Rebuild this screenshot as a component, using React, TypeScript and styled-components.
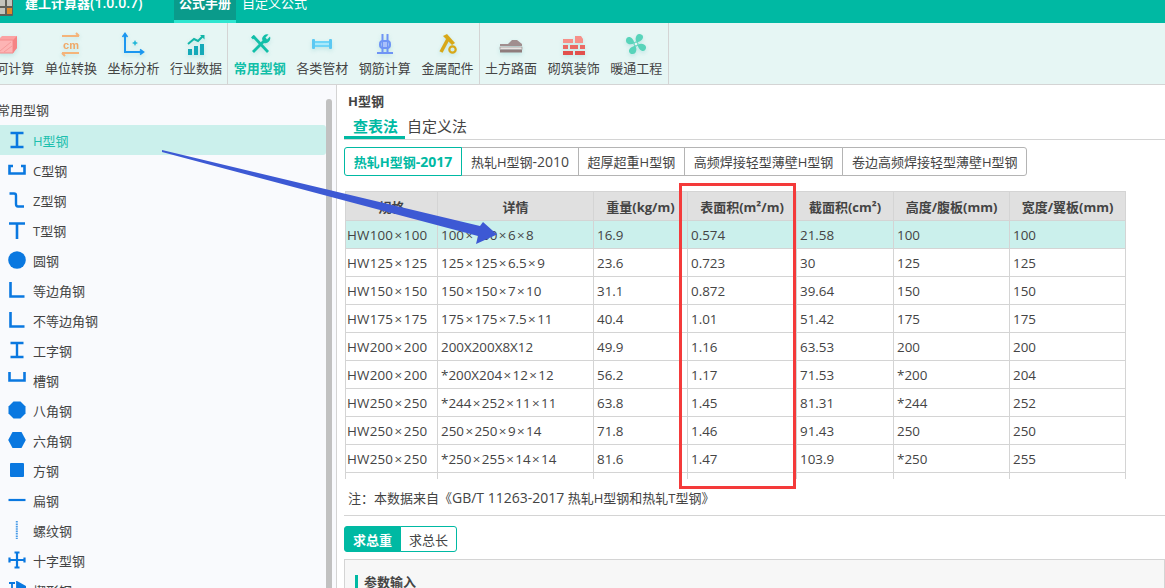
import React from 'react'
import styled, { createGlobalStyle } from 'styled-components'

const FONT = '"Open Sans", "Noto Sans CJK SC", "Noto Sans", sans-serif'
const TEAL = '#00b9a3'
const BORDER = '#d4d4d4'

const GlobalStyle = createGlobalStyle`
  html, body {
    margin: 0;
    height: 100%;
    overflow: hidden;
    background: #fff;
  }
  body {
    font-family: ${FONT};
    font-size: 13px;
    color: #444;
  }
`

// the screenshot is a crop of a bigger window, so the app hangs over the top and left edges
const Root = styled.div`
  position: relative;
  margin: -17px 0 0 -23px;
  width: 1188px;
  height: 605px;
  overflow: hidden;
  display: flex;
  flex-direction: column;
`

const Header = styled.div`
  height: 40px;
  flex: none;
  background: ${TEAL};
  display: flex;
  align-items: stretch;
  color: #fff;
`

const Logo = styled.svg`
  width: 32px;
  height: 32px;
  margin: 0 0 0 4px;
  align-self: center;
  position: relative;
  top: -1px;
`

const AppTitle = styled.div`
  font-size: 13px;
  font-weight: 600;
  line-height: 40px;
  margin-left: 12px;
  width: 149px;
  white-space: nowrap;
`

const Latin = styled.span`
  font-size: 14px;
`

const HeaderTab = styled.div<{ $active?: boolean }>`
  width: ${(p) => (p.$active ? '62px' : 'auto')};
  padding: ${(p) => (p.$active ? '0' : '0 0 0 6px')};
  box-sizing: border-box;
  text-align: center;
  line-height: 40px;
  font-size: 13px;
  font-weight: ${(p) => (p.$active ? 700 : 400)};
  background: ${(p) => (p.$active ? '#0a9b8b' : 'transparent')};
  border-bottom: 3px solid ${(p) => (p.$active ? '#2ee6d0' : 'transparent')};
  white-space: nowrap;
`

const Toolbar = styled.div`
  height: 61px;
  flex: none;
  display: flex;
  background: #e6f6f4;
  border-bottom: 1px solid ${BORDER};
`

const ToolGroup = styled.div`
  display: flex;
  border-right: 1px solid ${BORDER};
`

const ToolItem = styled.div<{ $active?: boolean }>`
  width: 62.6px;
  display: flex;
  flex-direction: column;
  align-items: center;
  padding-top: 8px;
  box-sizing: border-box;
  color: ${(p) => (p.$active ? '#12bfa8' : '#444')};
  font-weight: ${(p) => (p.$active ? 700 : 400)};
`

const ToolIcon = styled.svg`
  width: 26px;
  height: 26px;
  flex: none;
  filter: drop-shadow(0 2px 2px rgba(120, 200, 200, 0.35));
`

const ToolLabel = styled.div`
  margin-top: 2px;
  line-height: 18px;
  white-space: nowrap;
`

const Body = styled.div`
  flex: 1;
  display: flex;
  min-height: 0;
`

const Sidebar = styled.div`
  width: 360px;
  flex: none;
  display: flex;
  background: #f9fafd;
  border-right: 1px solid ${BORDER};
  box-sizing: border-box;
  overflow: hidden;
`

const SideList = styled.div`
  width: 349px;
  flex: none;
`

const SideHead = styled.div`
  height: 40px;
  box-sizing: border-box;
  padding: 11px 0 0 20px;
  line-height: 28px;
`

const SideItem = styled.div<{ $active?: boolean }>`
  height: 30px;
  display: flex;
  align-items: center;
  gap: 7px;
  padding-left: 31px;
  border-radius: 0 3px 3px 0;
  background: ${(p) => (p.$active ? '#cbf0ec' : 'transparent')};
  color: ${(p) => (p.$active ? '#1dbfae' : '#444')};
`

const SideIcon = styled.svg`
  width: 18px;
  height: 18px;
  flex: none;
`

const ScrollThumb = styled.div`
  width: 6px;
  height: 600px;
  margin-top: 14px;
  background: #c1c1c1;
  border-radius: 3px 3px 0 0;
`

const Content = styled.div`
  flex: 1;
  min-width: 0;
  padding-left: 7px;
  background: #fff;
`

const PageTitle = styled.div`
  padding: 7px 0 0 4px;
  font-weight: 700;
  line-height: 18px;
  height: 31px;
  box-sizing: border-box;
  color: #444;
`

const MethodTabs = styled.div`
  display: flex;
  height: 24px;
  box-sizing: border-box;
  border-bottom: 1px solid ${BORDER};
`

const MethodTab = styled.div<{ $active?: boolean }>`
  height: 23px;
  box-sizing: border-box;
  padding: ${(p) => (p.$active ? '0 7px 0 9px' : '0 0 0 2px')};
  font-size: 15px;
  line-height: 21px;
  font-weight: ${(p) => (p.$active ? 700 : 400)};
  color: ${(p) => (p.$active ? TEAL : '#444')};
  border-bottom: ${(p) => (p.$active ? `3px solid ${TEAL}` : 'none')};
`

const SegmentRow = styled.div<{ $top: number; $height: number }>`
  display: inline-flex;
  margin-top: ${(p) => p.$top}px;
  height: ${(p) => p.$height}px;
  vertical-align: top;
`

const SegmentWrap = styled.div`
  display: block;
  height: 36px;
`

const Segment = styled.div<{ $active?: boolean; $solid?: boolean; $teal?: boolean }>`
  padding: 0 ${(p) => (p.$solid || p.$teal ? '8px' : '8.8px')};
  display: flex;
  align-items: center;
  box-sizing: border-box;
  white-space: nowrap;
  background: ${(p) => (p.$solid ? TEAL : '#fff')};
  color: ${(p) => (p.$solid ? '#fff' : p.$active ? TEAL : '#444')};
  font-weight: ${(p) => (p.$active || p.$solid ? 700 : 400)};
  border: 1px solid ${(p) => (p.$active || p.$teal || p.$solid ? TEAL : '#b4b4b4')};
  margin-left: -1px;
  position: ${(p) => (p.$active ? 'relative' : 'static')};
  &:first-child {
    margin-left: 0;
    border-radius: 3px 0 0 3px;
  }
  &:last-child {
    border-radius: 0 3px 3px 0;
  }
`

const TableWrap = styled.div`
  margin: 15px 0 0 1px;
  width: 781px;
  height: 288px;
  overflow: hidden;
`

const Table = styled.table`
  width: 780px;
  table-layout: fixed;
  border-collapse: collapse;
`

const HeadCell = styled.th`
  height: 28px;
  padding: 0;
  background: #e0e0e0;
  border: 1px solid ${BORDER};
  font-size: 13px;
  font-weight: 700;
  text-align: center;
  color: #444;
`

const Row = styled.tr<{ $active?: boolean }>`
  background: ${(p) => (p.$active ? '#cbf0ec' : '#fff')};
`

const Cell = styled.td`
  height: 27px;
  padding: 0 3px;
  border: 1px solid ${BORDER};
  font-size: 13.4px;
  color: #444;
  white-space: nowrap;
  overflow: hidden;
  &:first-child {
    padding-left: 1px;
    letter-spacing: 0.2px;
  }
`

const Times = styled.span`
  margin: 0 1.4px;
`

const Note = styled.div`
  height: 37px;
  box-sizing: border-box;
  padding: 10px 0 0 4px;
  line-height: 18px;
  border-bottom: 1px solid ${BORDER};
`

const Panel = styled.div`
  margin-top: 7px;
  height: 80px;
  background: #f7f7f7;
  border: 1px solid ${BORDER};
  padding: 12px 0 0 10px;
  box-sizing: border-box;
`

const PanelTitle = styled.div`
  font-weight: 700;
  line-height: 18px;
  border-left: 3px solid ${TEAL};
  padding-left: 6px;
  height: 14px;
  display: flex;
  align-items: center;
  margin-top: 3px;
`

const Overlay = styled.svg`
  position: absolute;
  left: 23px;
  top: 17px;
  width: 1165px;
  height: 588px;
  pointer-events: none;
`

const RedBox = styled.div`
  position: absolute;
  left: 702px;
  top: 200px;
  width: 117px;
  height: 306px;
  box-sizing: border-box;
  border: 3px solid #f43a3a;
`

const blade = 'M13 11 C10 9 9.5 4 12.5 2.5 C16 1 19 4 16.5 8 C15.5 9.5 14.5 10.5 13 11 Z'

const tools = [
  [
    {
      label: '几何计算',
      icon: (
        <>
          <path d="M3 9 L7 5 H22 V17 L18 22 H3 Z" fill="#fba3a3" />
          <path d="M3 9 H18 V22 H3 Z" fill="#fdb4b4" stroke="#f58a8a" />
          <path d="M18 9 L22 5 V17 L18 22 Z" fill="#f58484" />
          <path d="M5 20 L16 11 M9 21 L17 15" stroke="#f69a9a" />
        </>
      ),
    },
    {
      label: '单位转换',
      icon: (
        <>
          <path d="M4 5 H21 M18 2 L21 5" stroke="#f4b47a" strokeWidth="2" fill="none" />
          <path d="M21 22 H4 M7 25 L4 22" stroke="#f4b47a" strokeWidth="2" fill="none" />
          <text x="13" y="17.5" fontSize="11" fontWeight="700" textAnchor="middle" fill="#f0a968" fontFamily="Liberation Sans">cm</text>
        </>
      ),
    },
    {
      label: '坐标分析',
      icon: (
        <>
          <path d="M5 3 V21 H23" stroke="#1b97f0" strokeWidth="2" fill="none" />
          <path d="M2.5 6 L5 2.5 L7.5 6 M20 18.5 L23.5 21 L20 23.5" stroke="#1b97f0" strokeWidth="1.6" fill="none" />
          <path d="M15 9 L16 11 L18 12 L16 13 L15 15 L14 13 L12 12 L14 11 Z" fill="#25b8d8" />
        </>
      ),
    },
    {
      label: '行业数据',
      icon: (
        <>
          <rect x="5" y="18" width="4" height="6" fill="#15a9b8" />
          <rect x="11" y="15" width="4" height="9" fill="#15a9b8" />
          <rect x="17" y="13" width="4" height="11" fill="#15a9b8" />
          <path d="M5 13 L11 8 L15 10 L20 5" stroke="#12b5a8" strokeWidth="2" fill="none" />
          <path d="M17 4 H21.5 V8.5 Z" fill="#12b5a8" />
        </>
      ),
    },
  ],
  [
    {
      label: '常用型钢',
      active: true,
      icon: (
        <>
          <path d="M6 5 L21 21" stroke="#12bfa8" strokeWidth="2.8" />
          <path d="M6 21 L17 10" stroke="#12bfa8" strokeWidth="2.8" />
          <path d="M15 8 A5 5 0 0 1 21.5 3.5 L18.5 6.5 L20 8.5 L23 5.5 A5 5 0 0 1 17 12 Z" fill="#12bfa8" />
          <path d="M4 6.5 L6.5 4 L8.5 6 L6 8.5 Z" fill="#12bfa8" />
        </>
      ),
    },
    {
      label: '各类管材',
      icon: (
        <>
          <rect x="3" y="10" width="20" height="6" fill="#6ed5f7" />
          <rect x="3" y="8" width="3" height="10" rx="1" fill="#5cc8f2" />
          <rect x="20" y="8" width="3" height="10" rx="1" fill="#5cc8f2" />
          <rect x="6" y="12" width="14" height="2" fill="#a8e9fb" />
        </>
      ),
    },
    {
      label: '钢筋计算',
      icon: (
        <>
          <path d="M10.5 3 V22 M15.5 3 V22" stroke="#6f94f5" strokeWidth="2" />
          <rect x="8" y="10" width="10" height="7" rx="3" fill="none" stroke="#6f94f5" strokeWidth="2" />
          <path d="M5 22 H21" stroke="#6f94f5" strokeWidth="2" />
          <rect x="11" y="11" width="4" height="5" fill="#a9c0fb" />
        </>
      ),
    },
    {
      label: '金属配件',
      icon: (
        <>
          <path d="M9 5 L13 3 L21 12 L18 14 Z" fill="#d8a818" />
          <path d="M14 8 L7 21" stroke="#d8a818" strokeWidth="3.5" />
          <circle cx="18.5" cy="18.5" r="3.2" fill="none" stroke="#d8a818" strokeWidth="2.2" />
        </>
      ),
    },
  ],
  [
    {
      label: '土方路面',
      icon: (
        <>
          <path d="M2 13 H10 L14 9 H19 L24 13 V15 H2 Z" fill="#a08e8e" />
          <rect x="2" y="16" width="22" height="2.5" fill="#e8e4e2" stroke="#8f8080" strokeWidth="0.6" />
          <rect x="2" y="19" width="22" height="2.5" fill="#8f7c7c" />
        </>
      ),
    },
    {
      label: '砌筑装饰',
      icon: (
        <>
          <path d="M2 8 H12 V12 H2 Z M14 5 H20 L22 8 V12 H14 Z" fill="#f69089" />
          <path d="M2 14 H7 V18 H2 Z M9 14 H17 V18 H9 Z M19 14 H24 V18 H19 Z" fill="#ea6a64" />
          <path d="M2 20 H12 V24 H2 Z M14 20 H24 V24 H14 Z" fill="#e2504c" />
        </>
      ),
    },
    {
      label: '暖通工程',
      icon: (
        <>
          <g transform="rotate(20 13 13)">
            <path d={blade} fill="#58d4ba" />
            <path d={blade} fill="#58d4ba" transform="rotate(90 13 13)" />
            <path d={blade} fill="#58d4ba" transform="rotate(180 13 13)" />
            <path d={blade} fill="#58d4ba" transform="rotate(270 13 13)" />
          </g>
          <circle cx="13" cy="13" r="2" fill="#e6f6f4" stroke="#4ecfb4" />
        </>
      ),
    },
  ],
]

const BLUE = '#0a78e0'

const sideItems: { label: string; active?: boolean; icon: JSX.Element }[] = [
  { label: 'H型钢', active: true, icon: <path d="M2.5 2 H15.5 M9 2 V16 M2.5 16 H15.5" stroke={BLUE} strokeWidth="2.6" fill="none" /> },
  { label: 'C型钢', icon: <path d="M5 6 H1.5 V13.5 H16.5 V6 H13" stroke={BLUE} strokeWidth="2.6" fill="none" transform="translate(0 -1)" /> },
  { label: 'Z型钢', icon: <path d="M1.5 2.5 H6 Q8 2.5 8 4.5 V13 Q8 15.5 10 15.5 H16" stroke={BLUE} strokeWidth="2.4" fill="none" /> },
  { label: 'T型钢', icon: <path d="M1 2.5 H17 M9 2.5 V18" stroke={BLUE} strokeWidth="2.6" fill="none" /> },
  { label: '圆钢', icon: <circle cx="9" cy="9" r="8.8" fill={BLUE} /> },
  { label: '等边角钢', icon: <path d="M2.5 1 V15.5 H16.5" stroke={BLUE} strokeWidth="2.6" fill="none" /> },
  { label: '不等边角钢', icon: <path d="M2.5 1 V15.5 H16.5" stroke={BLUE} strokeWidth="2.6" fill="none" /> },
  { label: '工字钢', icon: <path d="M2.5 2 H15.5 M9 2 V16 M2.5 16 H15.5" stroke={BLUE} strokeWidth="2.4" fill="none" /> },
  { label: '槽钢', icon: <path d="M1.5 2 V10.5 H16.5 V2" stroke={BLUE} strokeWidth="2.6" fill="none" transform="translate(0 -1)" /> },
  { label: '八角钢', icon: <path d="M5.5 0.5 H12.5 L17.5 5.5 V12.5 L12.5 17.5 H5.5 L0.5 12.5 V5.5 Z" fill={BLUE} /> },
  { label: '六角钢', icon: <path d="M4.5 1 H13.5 L17.8 9 L13.5 17 H4.5 L0.2 9 Z" fill={BLUE} /> },
  { label: '方钢', icon: <rect x="2" y="2" width="14" height="14" rx="1" fill={BLUE} /> },
  { label: '扁钢', icon: <path d="M0.5 9 H17.5" stroke={BLUE} strokeWidth="2.2" /> },
  { label: '螺纹钢', icon: <path d="M8.8 0 V18" stroke="#4a9ce8" strokeWidth="2" strokeDasharray="1.6 0.8" /> },
  { label: '十字型钢', icon: <path d="M9 1 V17 M1 9 H17 M6.5 1.5 H11.5 M6.5 16.5 H11.5 M1.5 6.5 V11.5 M16.5 6.5 V11.5" stroke={BLUE} strokeWidth="2.2" fill="none" /> },
  { label: '楔形钢', icon: <path d="M1 2 H7 M4 2 V16 M1 16 H7 M9 1 L18 6 L9 11 Z" stroke={BLUE} strokeWidth="1.8" fill={BLUE} /> },
]

const profiles = [
  <>热轧H型钢<Latin>-2017</Latin></>,
  <>热轧H型钢<Latin>-2010</Latin></>,
  '超厚超重H型钢',
  '高频焊接轻型薄壁H型钢',
  '卷边高频焊接轻型薄壁H型钢',
]

const columns = [
  { title: '规格', width: 92 },
  { title: '详情', width: 156 },
  { title: '重量(kg/m)', width: 94 },
  { title: '表面积(m²/m)', width: 109 },
  { title: '截面积(cm²)', width: 97 },
  { title: '高度/腹板(mm)', width: 116 },
  { title: '宽度/翼板(mm)', width: 116 },
]

const rows = [
  ['HW100×100', '100×100×6×8', '16.9', '0.574', '21.58', '100', '100'],
  ['HW125×125', '125×125×6.5×9', '23.6', '0.723', '30', '125', '125'],
  ['HW150×150', '150×150×7×10', '31.1', '0.872', '39.64', '150', '150'],
  ['HW175×175', '175×175×7.5×11', '40.4', '1.01', '51.42', '175', '175'],
  ['HW200×200', '200X200X8X12', '49.9', '1.16', '63.53', '200', '200'],
  ['HW200×200', '*200X204×12×12', '56.2', '1.17', '71.53', '*200', '204'],
  ['HW250×250', '*244×252×11×11', '63.8', '1.45', '81.31', '*244', '252'],
  ['HW250×250', '250×250×9×14', '71.8', '1.46', '91.43', '250', '250'],
  ['HW250×250', '*250×255×14×14', '81.6', '1.47', '103.9', '*250', '255'],
  ['', '', '', '', '', '', ''],
]

// the × sits wider in the reference than in Open Sans
const withTimes = (value: string) =>
  value.split('×').map((part, i) => (
    <React.Fragment key={i}>
      {i > 0 && <Times>×</Times>}
      {part}
    </React.Fragment>
  ))

const App = () => (
  <Root>
    <GlobalStyle />
    <Header>
      <Logo viewBox="0 0 32 32">
        <rect x="2" y="2" width="30" height="28" rx="1" fill="#5f6058" />
        <rect x="19" y="6" width="13" height="6" fill="#2f3a34" />
        <rect x="19" y="14" width="5" height="6" fill="#c4c4bc" />
        <rect x="26" y="14" width="5" height="6" fill="#c4c4bc" />
        <rect x="19" y="22" width="5" height="6" fill="#c4c4bc" />
        <rect x="26" y="22" width="5" height="6" fill="#e08a2c" />
      </Logo>
      <AppTitle>建工计算器<Latin>(1.0.0.7)</Latin></AppTitle>
      <HeaderTab $active>公式手册</HeaderTab>
      <HeaderTab>自定义公式</HeaderTab>
    </Header>
    <Toolbar>
      {tools.map((group, i) => (
        <ToolGroup key={i}>
          {group.map((tool) => (
            <ToolItem key={tool.label} $active={'active' in tool}>
              <ToolIcon viewBox="0 0 26 26">{tool.icon}</ToolIcon>
              <ToolLabel>{tool.label}</ToolLabel>
            </ToolItem>
          ))}
        </ToolGroup>
      ))}
    </Toolbar>
    <Body>
      <Sidebar>
        <SideList>
          <SideHead>常用型钢</SideHead>
          {sideItems.map((item) => (
            <SideItem key={item.label} $active={item.active}>
              <SideIcon viewBox="0 0 18 18">{item.icon}</SideIcon>
              {item.label}
            </SideItem>
          ))}
        </SideList>
        <ScrollThumb />
      </Sidebar>
      <Content>
        <PageTitle>H型钢</PageTitle>
        <MethodTabs>
          <MethodTab $active>查表法</MethodTab>
          <MethodTab>自定义法</MethodTab>
        </MethodTabs>
        <SegmentWrap>
          <SegmentRow $top={7} $height={29}>
            {profiles.map((name, i) => (
              <Segment key={i} $active={i === 0}>{name}</Segment>
            ))}
          </SegmentRow>
        </SegmentWrap>
        <TableWrap>
          <Table>
            <colgroup>
              {columns.map((col) => (
                <col key={col.title} width={col.width} />
              ))}
            </colgroup>
            <thead>
              <tr>
                {columns.map((col) => (
                  <HeadCell key={col.title}>{col.title}</HeadCell>
                ))}
              </tr>
            </thead>
            <tbody>
              {rows.map((row, i) => (
                <Row key={i} $active={i === 0}>
                  {row.map((value, j) => (
                    <Cell key={j}>{withTimes(value)}</Cell>
                  ))}
                </Row>
              ))}
            </tbody>
          </Table>
        </TableWrap>
        <Note>注：本数据来自《<Latin>GB/T 11263-2017</Latin> 热轧H型钢和热轧T型钢》</Note>
        <SegmentRow $top={10} $height={26}>
          <Segment $solid>求总重</Segment>
          <Segment $teal>求总长</Segment>
        </SegmentRow>
        <Panel>
          <PanelTitle>参数输入</PanelTitle>
        </Panel>
      </Content>
    </Body>
    <RedBox />
    <Overlay viewBox="0 0 1165 588">
      <path d="M162 150 L480 226 L483 222 L497 234.5 L476 244 L478 236 L162 152 Z" fill="#3d59d4" />
    </Overlay>
  </Root>
)

export default App
